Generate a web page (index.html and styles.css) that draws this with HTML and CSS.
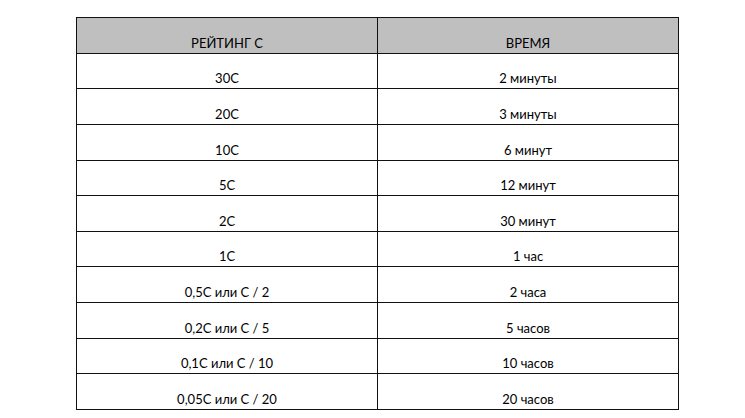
FILE: index.html
```html
<!DOCTYPE html>
<html lang="ru">
<head>
<meta charset="utf-8">
<link rel="stylesheet" href="styles.css">
</head>
<body>
<table class="rates">
  <thead>
    <tr class="head"><th>РЕЙТИНГ С</th><th>ВРЕМЯ</th></tr>
  </thead>
  <tbody>
    <tr><td>30C</td><td>2 минуты</td></tr>
    <tr><td>20C</td><td>3 минуты</td></tr>
    <tr><td>10C</td><td>6 минут</td></tr>
    <tr><td>5C</td><td>12 минут</td></tr>
    <tr><td>2C</td><td>30 минут</td></tr>
    <tr><td>1C</td><td>1 час</td></tr>
    <tr><td>0,5C или C / 2</td><td>2 часа</td></tr>
    <tr><td>0,2C или C / 5</td><td>5 часов</td></tr>
    <tr><td>0,1C или C / 10</td><td>10 часов</td></tr>
    <tr><td>0,05C или C / 20</td><td>20 часов</td></tr>
  </tbody>
</table>
</body>
</html>
```
FILE: styles.css
```css
html, body {
  margin: 0;
  padding: 0;
  background: #ffffff;
}
body {
  padding: 17px 0 0 76px;
  font-family: Lato, "Open Sans", sans-serif;
  font-size: 13px;
  color: #000000;
}
.rates {
  border-collapse: collapse;
  width: 603px;
  table-layout: fixed;
}
.rates th, .rates td {
  border: 1px solid #111111;
  height: 35.64px;
  padding: 0 0 2px 0;
  box-sizing: border-box;
  text-align: center;
  vertical-align: bottom;
  font-weight: normal;
  line-height: 16px;
}
.head th {
  background: #bfbfbf;
}
```
